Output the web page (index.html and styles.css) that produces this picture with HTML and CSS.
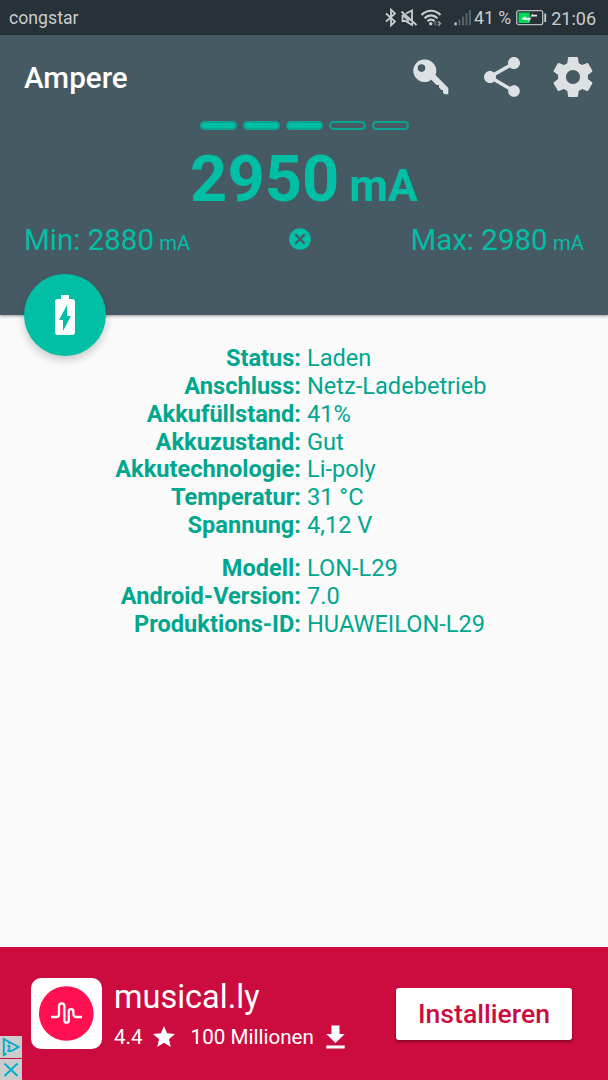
FILE: index.html
```html
<!DOCTYPE html>
<html lang="de">
<head>
    <meta charset="UTF-8">
    <meta name="viewport" content="width=device-width, initial-scale=1.0">
    <title>Ampere</title>
    <link rel="stylesheet" href="styles.css">
</head>
<body>
    <div class="statusbar">
        <span class="carrier">congstar</span>
        <svg class="status-icons" width="88" height="20" viewBox="0 0 88 20" fill="none" stroke="#c9cdcf" stroke-width="1.800">
            <!-- bluetooth -->
            <path d="M1 5.500 L10 13.500 L6 17.300 V1.700 L10 5.500 L1 13.500"/>
            <!-- muted speaker -->
            <path d="M21 5.500 L27 2.500 V13 M17.500 7 V13 H20.500 L27 17 V14.500 M17.500 6.500 L24 13"/>
            <path d="M16.500 3.500 L31.500 17"/>
            <!-- wifi -->
            <path stroke-width="2.200" d="M36.500 7 C42 1.300 50 1.300 55.500 7 M39.500 10.300 C43.500 6.300 48.500 6.300 52.500 10.300 M42.500 13.200 C44.700 11.300 47.300 11.300 49.500 13.200"/>
            <circle cx="45.700" cy="15.800" r="1.700" fill="#c9cdcf" stroke="none"/>
            <path d="M51.500 13.500 L49.500 15.500 L51.500 17.500" stroke="#53636c"/>
            <path d="M53.300 13.500 L55.300 15.500 L53.300 17.500" stroke="#8b979c"/>
            <!-- signal -->
            <path fill="#c9cdcf" stroke="none" d="M69.500 14.500h2.200v2.800h-2.200z"/>
            <path fill="#53636c" stroke="none" d="M73.500 11.500h2v5.800h-2z M77 8.500h2v8.800h-2z M80.500 5h2v12.300h-2z M84 2h2v15.300h-2z"/>
        </svg>
        <span class="percent">41 %</span>
        <svg class="battery" width="31" height="16" viewBox="0 0 31 16">
            <rect x="0.700" y="0.700" width="26" height="14" rx="2" fill="none" stroke="#b5babd" stroke-width="1.300"/>
            <rect x="2.500" y="2.500" width="11.200" height="10.500" fill="#00d85a"/>
            <path d="M28.300 3.500h1.800v8.500h-1.800z" fill="#c9cdcf"/>
            <path d="M5 9 L9.500 6 V7.800 H15.500 L12.500 12 V10 H9.500z M14 6.500 L17 3.500 V4.800 H21 V6.500z" fill="#e6e9ea"/>
        </svg>
        <span class="clock">21:06</span>
    </div>

    <header class="header">
        <div class="toolbar">
            <h1>Ampere</h1>
            <svg class="key" width="36" height="36" viewBox="0 0 36 36" fill="#dee1e3">
                <path fill-rule="evenodd" d="M11.500 0.500 a11.300 11.300 0 1 0 4.500 21.700 L18 20.500 L23.500 26 H26 V28.500 L28.500 31 H30 V33.500 L31.500 35.300 H35.300 V29 L22.500 16 A11.300 11.300 0 0 0 11.500 0.500z M8.500 5.300 a3.800 3.800 0 1 1 0 7.600 a3.800 3.800 0 1 1 0 -7.600z"/>
            </svg>
            <svg class="share" width="48" height="48" viewBox="0 0 24 24" fill="#dee1e3">
                <path d="M18 16.080c-.76 0-1.440.3-1.960.77L8.910 12.700c.05-.23.09-.46.09-.7s-.04-.47-.09-.7l7.050-4.110c.54.5 1.250.81 2.040.81 1.660 0 3-1.340 3-3s-1.340-3-3-3-3 1.340-3 3c0 .24.04.47.09.7L8.040 9.810C7.500 9.310 6.790 9 6 9c-1.660 0-3 1.340-3 3s1.340 3 3 3c.79 0 1.500-.31 2.040-.81l7.120 4.160c-.05.21-.08.43-.08.65 0 1.610 1.310 2.920 2.920 2.920s2.920-1.310 2.920-2.920-1.310-2.920-2.920-2.920z"/>
            </svg>
            <svg class="gear" width="48" height="48" viewBox="0 0 24 24" fill="#dee1e3">
                <path d="M19.430 12.980c.04-.32.07-.64.07-.98s-.03-.66-.07-.98l2.110-1.650c.19-.15.24-.42.12-.64l-2-3.460c-.12-.22-.39-.3-.61-.22l-2.490 1c-.52-.4-1.080-.73-1.690-.98l-.38-2.650C14.460 2.180 14.250 2 14 2h-4c-.25 0-.46.18-.49.42l-.38 2.650c-.61.25-1.170.59-1.690.98l-2.490-1c-.23-.09-.49 0-.61.22l-2 3.460c-.13.22-.07.49.12.64l2.110 1.650c-.04.32-.07.65-.07.98s.03.66.07.98l-2.110 1.650c-.19.15-.24.42-.12.64l2 3.460c.12.22.39.3.61.22l2.490-1c.52.4 1.080.73 1.690.98l.38 2.650c.03.24.24.42.49.42h4c.25 0 .46-.18.49-.42l.38-2.650c.61-.25 1.170-.59 1.690-.98l2.490 1c.23.09.49 0 .61-.22l2-3.460c.12-.22.07-.49-.12-.64l-2.110-1.650zM12 15.500c-1.930 0-3.500-1.570-3.500-3.500s1.570-3.500 3.500-3.500 3.500 1.570 3.500 3.500-1.570 3.500-3.500 3.500z"/>
            </svg>
        </div>
        <div class="level">
            <span class="full"></span>
            <span class="full"></span>
            <span class="full"></span>
            <span></span>
            <span></span>
        </div>
        <div class="current">2950 <small>mA</small></div>
        <div class="minmax">
            <div class="min">Min: 2880 <small>mA</small></div>
            <svg class="reset" width="26" height="26" viewBox="0 0 24 24" fill="#00bfa5">
                <path d="M12 2C6.470 2 2 6.470 2 12s4.470 10 10 10 10-4.470 10-10S17.530 2 12 2zm5 13.590L15.590 17 12 13.410 8.410 17 7 15.590 10.590 12 7 8.410 8.410 7 12 10.590 15.590 7 17 8.410 13.410 12 17 15.590z"/>
            </svg>
            <div class="max">Max: 2980 <small>mA</small></div>
        </div>
        <div class="fab">
            <svg width="48" height="48" viewBox="0 0 24 24" fill="#fff">
                <path d="M15.670 4H14V2h-4v2H8.330C7.600 4 7 4.600 7 5.330v15.330C7 21.400 7.600 22 8.330 22h7.330c.74 0 1.340-.6 1.340-1.330V5.330C17 4.600 16.400 4 15.670 4zM11 20v-5.500H9L13 7v5.500h2L11 20z"/>
            </svg>
        </div>
    </header>

    <main class="info">
        <dl>
            <dt>Status:</dt><dd>Laden</dd>
            <dt>Anschluss:</dt><dd>Netz-Ladebetrieb</dd>
            <dt>Akkufüllstand:</dt><dd>41%</dd>
            <dt>Akkuzustand:</dt><dd>Gut</dd>
            <dt>Akkutechnologie:</dt><dd>Li-poly</dd>
            <dt>Temperatur:</dt><dd>31 °C</dd>
            <dt>Spannung:</dt><dd>4,12 V</dd>
        </dl>
        <dl>
            <dt>Modell:</dt><dd>LON-L29</dd>
            <dt>Android-Version:</dt><dd>7.0</dd>
            <dt>Produktions-ID:</dt><dd>HUAWEILON-L29</dd>
        </dl>
    </main>

    <footer class="ad">
        <div class="logo">
            <svg width="71" height="71" viewBox="0 0 71 71">
                <circle cx="35.300" cy="35.500" r="27.300" fill="#ff1050"/>
                <path d="M20 39 H25.500 Q28 39 28 36.500 V28 A2.700 2.700 0 0 1 33.400 28 V42.500 A2.200 2.200 0 0 0 37.800 42.500 V33.500 A2.300 2.300 0 0 1 42.400 33.500 V36.500 Q42.400 39 45 39 H51" fill="none" stroke="#fff" stroke-width="2.300"/>
            </svg>
        </div>
        <div class="app">
            <div class="name">musical.ly</div>
            <div class="stats">
                <span>4.4</span>
                <svg class="star" width="22" height="21" viewBox="2 2 20 19" fill="#fff">
                    <path d="M12 17.270L18.180 21l-1.640-7.030L22 9.240l-7.190-.61L12 2 9.190 8.630 2 9.240l5.460 4.730L5.820 21z"/>
                </svg>
                <span>100 Millionen</span>
                <svg class="download" width="19" height="24" viewBox="0 0 19 24" fill="#fff">
                    <path d="M5.500 0.500h8v8.500h5.200l-9.200 9-9.200-9h5.200z M0.300 20.500h18.400v3h-18.400z"/>
                </svg>
            </div>
        </div>
        <button class="install">Installieren</button>
        <div class="adchoices">
            <svg width="22" height="22" viewBox="0 0 22 22" fill="none" stroke="#00aecd" stroke-width="1.900">
                <path d="M6.500 17.700 L3.800 19 V3 L18.500 11 L11 15.300"/>
                <path d="M7.500 10 H9.300 V15 M7.300 15 H11.300 M8.300 7 H10.200"/>
            </svg>
            <svg width="22" height="21" viewBox="0 0 22 21" fill="none" stroke="#00aecd" stroke-width="1.900">
                <path d="M4.500 4.500 L17.500 17 M17.500 4.500 L4.500 17"/>
            </svg>
        </div>
    </footer>
</body>
</html>
```
FILE: styles.css
```css
* {
    box-sizing: border-box;
}

body {
    background-color: #fafafa;
    font-family: Roboto, sans-serif;
    margin: 0;
    height: 1080px;
    display: flex;
    flex-direction: column;
    overflow: hidden;
}

svg {
    display: block;
    flex: none;
}

/* Android status bar */
.statusbar {
    height: 35px;
    background-color: #263238;
    color: #c9cdcf;
    display: flex;
    align-items: center;
    padding: 1px 12px 0 9px;
    font-size: 17.700px;
    white-space: nowrap;
}

.carrier {
    margin-right: auto;
}

.percent {
    margin: 0 5px 0 1px;
}

.clock {
    margin-left: 4px;
    font-size: 18px;
}

/* Header with the current values */
.header {
    position: relative;
    height: 280px;
    background-color: #465a64;
    color: #00bfa5;
    box-shadow: 0 1px 3px rgba(0, 0, 0, 0.4);
}

.toolbar {
    height: 84px;
    display: flex;
    align-items: center;
    padding: 0 11.500px 0 24px;
}

.toolbar h1 {
    margin: 0 auto 0 0;
    padding-top: 2px;
    color: #fff;
    font-size: 29.600px;
    font-weight: 500;
}

.share {
    margin: 0 23px 0 29px;
}

.level {
    display: flex;
    justify-content: center;
    gap: 6px;
    margin-top: 2px;
}

.level span {
    width: 37px;
    height: 9px;
    border: 2px solid #08a592;
    border-radius: 5px;
}

.level .full {
    background-color: #00bfa5;
}

.current {
    height: 84px;
    line-height: 99px;
    text-align: center;
    font-size: 65px;
    font-weight: bold;
    white-space: nowrap;
}

.current small {
    font-size: 44.500px;
    margin-left: -6px;
}

.minmax {
    display: grid;
    grid-template-columns: 263px 26px 1fr;
    align-items: center;
    height: 50px;
    padding: 0 24px;
    font-size: 29.500px;
    white-space: nowrap;
}

.minmax small {
    font-size: 20.300px;
    margin-left: -2px;
}

.min,
.max {
    padding-top: 2px;
}

.max {
    text-align: right;
}

/* Round button over the header edge */
.fab {
    position: absolute;
    left: 24px;
    bottom: -41px;
    width: 82px;
    height: 82px;
    border-radius: 50%;
    background-color: #00bfa5;
    display: flex;
    align-items: center;
    justify-content: center;
    box-shadow: 0 4px 8px rgba(0, 0, 0, 0.2);
}

/* Battery and device details */
.info {
    flex: 1;
    padding-top: 30px;
    color: #00a78e;
    font-size: 23.600px;
    line-height: 27.850px;
}

.info dl {
    display: grid;
    grid-template-columns: 301px 1fr;
    column-gap: 6px;
    margin: 0 0 15px;
}

.info dt {
    text-align: right;
    font-weight: bold;
}

.info dd {
    margin: 0;
}

/* Ad banner */
.ad {
    position: relative;
    height: 133px;
    background-color: #cc0c3e;
    color: #fff;
    display: flex;
    align-items: center;
    padding: 0 36px 0 31px;
}

.logo {
    width: 71px;
    height: 71px;
    border-radius: 10px;
    background-color: #fff;
}

.app {
    margin-left: 12px;
    padding-top: 5px;
}

.name {
    font-size: 32.500px;
    line-height: 41px;
}

.stats {
    display: flex;
    align-items: center;
    height: 37px;
    font-size: 20.600px;
    white-space: nowrap;
}

.star {
    margin: 0 16px 0 10px;
}

.download {
    margin-left: 12px;
}

.install {
    margin-left: auto;
    width: 176px;
    height: 52px;
    padding: 0;
    border: none;
    border-radius: 3px;
    background-color: #fff;
    color: #cc0c3e;
    font-family: inherit;
    font-size: 26.600px;
    font-weight: 500;
    box-shadow: 0 2px 3px rgba(0, 0, 0, 0.35);
}

.adchoices {
    position: absolute;
    left: 0;
    bottom: 0;
    display: flex;
    flex-direction: column;
    gap: 1px;
}

.adchoices svg {
    background-color: #ccc;
}
```
